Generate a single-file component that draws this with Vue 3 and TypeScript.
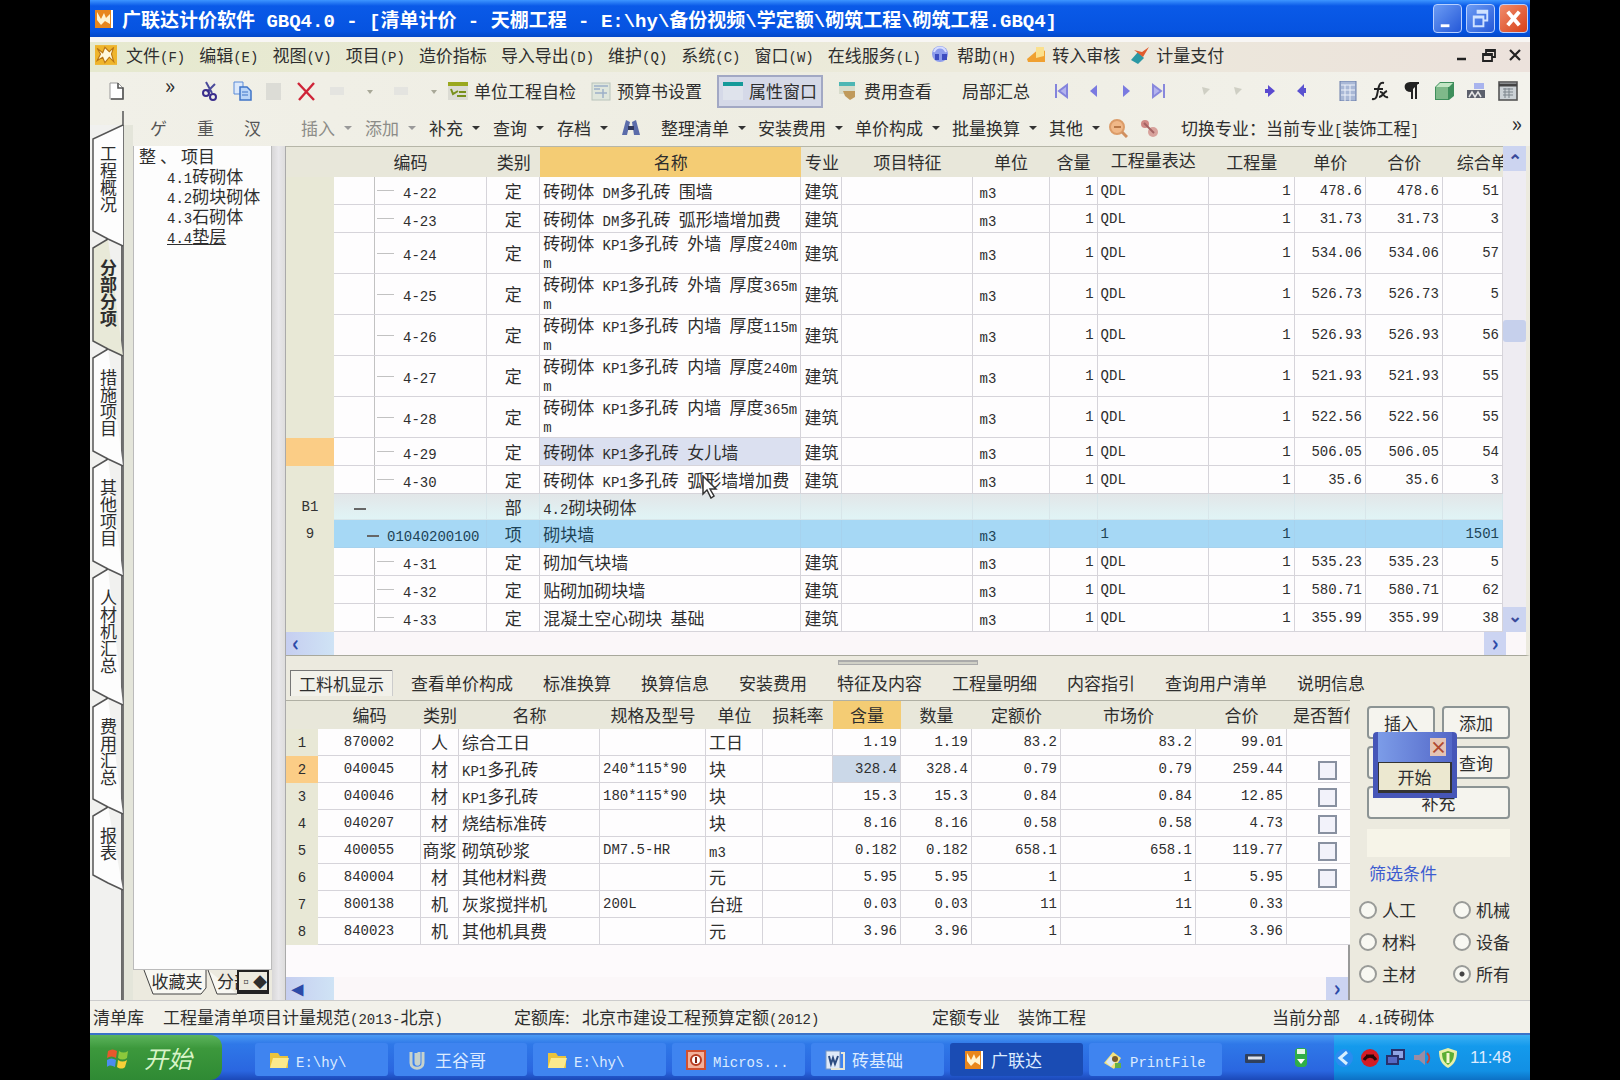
<script setup lang="ts">
import { h, ref } from 'vue'

// Splits a label into CJK and half-width runs so each gets its own face.
const Mixed = (props: { t: string }) =>
  props.t
    .split(/([\x20-\x7e]+)/)
    .filter((s) => s.length)
    .map((s) => (/^[\x20-\x7e]/.test(s) ? h('span', { class: 'en' }, s) : s))
Mixed.props = ['t']

const icons: Record<string, string> = {
  app: '<rect x="1" y="1" width="17" height="18" fill="#e8861c"/><path d="M3 3l4 7 3-6 2 5 4-4v10l-5-3-4 4-4-5z" fill="#fff3d0"/><rect x="17" y="1" width="2" height="18" fill="#fff"/>',
  app2: '<rect x="0" y="1" width="20" height="18" fill="#efb52c"/><path d="M2 4l5 4 2-5 4 4 4-4-2 6 2 7-4-4-4 5-2-5-5 3 3-6z" fill="#fff8dc" stroke="#b87412" stroke-width="1"/>',
  doc: '<path d="M4 2h8l5 5v11H4z" fill="#fff" stroke="#999"/><path d="M12 2v5h5v11H5" fill="none" stroke="#555" stroke-width="1.6"/>',
  cut: '<path d="M6 1l6 11M15 3L7 11" stroke="#4a4a9a" stroke-width="2" fill="none"/><circle cx="6" cy="12" r="3" fill="none" stroke="#3a2d8c" stroke-width="2"/><circle cx="13" cy="16" r="3" fill="none" stroke="#3a2d8c" stroke-width="2"/>',
  copy: '<path d="M2 1h9v12H2z" fill="#dce9fb" stroke="#5b8bd8"/><path d="M8 6h7l4 4v9H8z" fill="#b9d4f7" stroke="#3f74c8" stroke-width="1.5"/><path d="M10 11h6M10 14h6" stroke="#3f74c8"/>',
  paste: '<rect x="2" y="2" width="15" height="17" fill="#dcdcd6"/>',
  del: '<path d="M2 2l16 17M18 2L3 19" stroke="#cf2438" stroke-width="2.4"/>',
  faint: '<path d="M2 6h14v8H2z" fill="#e4e4e0"/>',
  dot: '<path d="M7 9h6l-3 4z" fill="#a8a898"/>',
  check: '<rect x="0" y="1" width="20" height="18" fill="#dcdcd4"/><rect x="0" y="1" width="20" height="4" fill="#9aa81e"/><path d="M3 8l2 5 5-3M9 15h9M11 11h7" stroke="#78901c" stroke-width="2" fill="none"/>',
  budget: '<rect x="1" y="2" width="18" height="17" fill="#dfe6dc" stroke="#b9c4bc"/><path d="M3 5h14M3 8h6M12 8v9M4 12h12" stroke="#9db0c8" stroke-width="1.5"/>',
  win: '<rect x="0" y="1" width="20" height="18" fill="#dfe3ec"/><rect x="0" y="1" width="20" height="4" fill="#159a9a"/>',
  fee: '<rect x="1" y="1" width="16" height="12" fill="#d8dccc"/><rect x="1" y="1" width="16" height="4" fill="#4db6b4"/><path d="M5 10h12v6l-5 3-5-4z" fill="#c09a5c"/>',
  first: '<path d="M4 3v14M15 4v12l-8-6z" stroke="#8484dc" stroke-width="2" fill="#b4b4ee"/>',
  prev: '<path d="M13 4v12l-7-6z" fill="#7a7ae0"/>',
  next: '<path d="M7 4v12l7-6z" fill="#7a7ae0"/>',
  last: '<path d="M16 3v14M5 4v12l8-6z" stroke="#8888dc" stroke-width="2" fill="#b4b4ee"/>',
  faintTri: '<path d="M6 6l8 2-6 6z" fill="#cfcfc4"/>',
  right: '<path d="M8 4l7 6-7 6v-4H5V8h3z" fill="#5a4ad0"/>',
  left: '<path d="M12 3l-7 7 7 6v-4h2V7h-2z" fill="#5a52d0"/>',
  sheet: '<rect x="2" y="0" width="16" height="20" fill="#a9b8d6" stroke="#6b7eaa"/><path d="M3 4h14M7 4v16M12 4v16M3 9h14M3 14h14" stroke="#eef2fa"/>',
  fx: '<path d="M2 18c5 1 5-4 6-9s2-8 6-7M4 8h9M10 11c4-1 3 7 8 5M17 10c-3 1-5 6-8 6" fill="none" stroke="#222" stroke-width="2"/>',
  para: '<path d="M10 2v16M14 2v16M17 2H8c-6 0-6 8 1 8" stroke="#222" stroke-width="2" fill="#222"/>',
  book: '<path d="M1 6l5-5h14v14l-5 4H1z" fill="#3f8f5c"/><path d="M2 6h12v12H2z" fill="#7fb98a"/><path d="M2 6l4-4h13l-4 4z" fill="#c2e6c4"/>',
  print: '<path d="M8 2h10v6H8z" fill="#a9b4ee"/><rect x="1" y="9" width="18" height="8" fill="#5c606c"/><path d="M3 16l3-5 3 5 3-5 3 5" stroke="#e6e6e6" stroke-width="1.5" fill="none"/>',
  calc: '<rect x="1" y="1" width="18" height="18" fill="#ccd2d6" stroke="#555" stroke-width="1.6"/><path d="M1 4h18" stroke="#444" stroke-width="3"/><path d="M5 8h10M5 11h10M5 14h10M7 7v10M11 7v10" stroke="#7d858c"/>',
  find: '<path d="M5 2l4 2-3 13H1zM11 4l4-2 4 15h-6z" fill="#5b6caa"/><path d="M7 8h6v4H7z" fill="#30385c"/>',
  lens: '<circle cx="9" cy="9" r="7" fill="#f0b888" stroke="#dc9c68" stroke-width="2"/><path d="M14 14l5 5" stroke="#d09060" stroke-width="3"/><path d="M6 9h7" stroke="#b87848" stroke-width="2"/>',
  link: '<circle cx="6" cy="6" r="4" fill="#d08a86"/><circle cx="14" cy="14" r="5" fill="#d8a29c"/><path d="M5 5l10 10" stroke="#a46464" stroke-width="2"/>',
  help: '<circle cx="9" cy="9" r="8" fill="#8c9cec"/><path d="M4 9h4v6H4zM11 9h5v6h-5z" fill="#3c4cc0"/><path d="M3 7c2-6 10-6 12 0" stroke="#d7ddff" stroke-width="2" fill="none"/>',
  audit: '<path d="M1 14L14 3l5 3v11H2z" fill="#f0a030"/><path d="M10 2h8v9l-8 2z" fill="#fbe08c"/>',
  pay: '<path d="M1 15l7-8 6 6-6 6z" fill="#2b98a4"/><path d="M4 5l8 2 7-5-6 10z" fill="#e05c30"/>',
  folder: '<path d="M1 3h8l2 3h8v12H1z" fill="#e9c33c"/><path d="M4 8h16l-3 10H1z" fill="#fbe98c"/>',
  clip: '<path d="M3 2v11c0 7 12 7 12 0V2M8 3v9c0 3 3 3 3 0V2" fill="none" stroke="#c6d2cc" stroke-width="3"/>',
  ppt: '<rect x="1" y="1" width="18" height="18" fill="#f2b09a" stroke="#d05030" stroke-width="2"/><circle cx="10" cy="10" r="5" fill="#fff" stroke="#b83c20" stroke-width="2"/><path d="M10 7v6" stroke="#802010" stroke-width="2"/>',
  word: '<rect x="1" y="1" width="14" height="18" fill="#dfeaf8" stroke="#7898c4"/><path d="M4 6l2 8 2-6 2 6 3-8" fill="none" stroke="#2c4c80" stroke-width="2"/><path d="M16 3h3v16H6" fill="none" stroke="#e8e8d8" stroke-width="2"/>',
  printer: '<path d="M1 13l9-11 8 6-7 11z" fill="#f4e27c"/><path d="M3 12l5-6 5 5-5 6z" fill="#d8e8f8"/><circle cx="12" cy="9" r="3" fill="#7a5c28"/><path d="M12 13h6v5h-6z" fill="#62b048"/>',
  kbd: '<rect x="0" y="6" width="20" height="9" rx="1" fill="#30405c"/><path d="M3 10h14" stroke="#dfe4ec" stroke-width="3"/>',
  usb: '<rect x="4" y="0" width="12" height="19" rx="4" fill="#2fae48"/><rect x="6" y="1" width="8" height="5" fill="#e4f8e4"/><path d="M6 11h8l-4 5z" fill="#fff"/>',
  chev: '<circle cx="10" cy="10" r="9" fill="#2a8cf0"/><path d="M13 4l-7 6 7 6" stroke="#d8efff" stroke-width="3" fill="none"/>',
  red: '<circle cx="10" cy="10" r="9" fill="#d41c24"/><path d="M4 12c3-5 9-5 12 0M6 8h8" stroke="#2c0808" stroke-width="3" fill="none"/>',
  net: '<rect x="6" y="2" width="12" height="9" fill="#8fa4e4" stroke="#28306c" stroke-width="2"/><rect x="1" y="8" width="11" height="8" fill="#5668c4" stroke="#28306c" stroke-width="2"/>',
  vol: '<path d="M2 7h5l6-5v15l-6-5H2z" fill="#9a8ca4"/><path d="M15 5c3 3 3 7 0 10" stroke="#c84038" stroke-width="2" fill="none"/>',
  shield: '<path d="M10 0l9 3c0 8-2 13-9 17C3 16 1 11 1 3z" fill="#e8f0a8"/><path d="M10 3l6 2c0 6-2 9-6 12-4-3-6-6-6-12z" fill="#5cae34"/><path d="M10 5v10" stroke="#f6f8d0" stroke-width="3"/>',
}

const menus = ['文件(F)', '编辑(E)', '视图(V)', '项目(P)', '造价指标', '导入导出(D)', '维护(Q)', '系统(C)', '窗口(W)', '在线服务(L)']
const iconMenus = [
  { icon: 'help', label: '帮助(H)' },
  { icon: 'audit', label: '转入审核' },
  { icon: 'pay', label: '计量支付' },
]
const editIcons = ['cut', 'copy', 'paste', 'del', 'faint', 'dot', 'faint', 'dot']
const toolButtons = [
  { icon: 'check', label: '单位工程自检', on: false },
  { icon: 'budget', label: '预算书设置', on: false },
  { icon: 'win', label: '属性窗口', on: true },
  { icon: 'fee', label: '费用查看', on: false },
]
const navIcons = ['first', 'prev', 'next', 'last']
const moveIcons = ['faintTri', 'faintTri', 'right', 'left']
const rightIcons = ['sheet', 'fx', 'para', 'book', 'print', 'calc']
const editMenus = [
  { label: '插入', dim: true },
  { label: '添加', dim: true },
  { label: '补充', dim: false },
  { label: '查询', dim: false },
  { label: '存档', dim: false },
]
const gridMenus = ['整理清单', '安装费用', '单价构成', '批量换算', '其他']

const sideTabs = [
  { label: '工程概况', h: 114 },
  { label: '分部分项', h: 110 },
  { label: '措施项目', h: 110 },
  { label: '其他项目', h: 110 },
  { label: '人材机汇总', h: 129 },
  { label: '费用汇总', h: 109 },
  { label: '报表', h: 76 },
]
const activeSide = ref(1)
const tabPath = (i: number, height: number) =>
  (i === 0 ? 'M31 -14 V0 L1 14' : 'M16 0 L1 9') + ` V${height - 8} L16 ${height} L31 ${height + 7}`

const tree = ['4.1砖砌体', '4.2砌块砌体', '4.3石砌体', '4.4垫层']

const topCols = [
  { label: '', w: 48 },
  { label: '编码', w: 153 },
  { label: '类别', w: 53 },
  { label: '名称', w: 261 },
  { label: '专业', w: 41 },
  { label: '项目特征', w: 130 },
  { label: '单位', w: 77 },
  { label: '含量', w: 48 },
  { label: '工程量表达', w: 111 },
  { label: '工程量', w: 86 },
  { label: '单价', w: 71 },
  { label: '合价', w: 77 },
  { label: '综合单', w: 60 },
]
type Row = { no?: string; code: string; kind: string; name: string; price?: string; sum?: string; all: string; type?: string; tall?: boolean }
const rows: Row[] = [
  { code: '4-22', kind: '定', name: '砖砌体 DM多孔砖 围墙', price: '478.6', sum: '478.6', all: '51' },
  { code: '4-23', kind: '定', name: '砖砌体 DM多孔砖 弧形墙增加费', price: '31.73', sum: '31.73', all: '3' },
  { code: '4-24', kind: '定', name: '砖砌体 KP1多孔砖 外墙 厚度240m\nm', price: '534.06', sum: '534.06', all: '57', tall: true },
  { code: '4-25', kind: '定', name: '砖砌体 KP1多孔砖 外墙 厚度365m\nm', price: '526.73', sum: '526.73', all: '5', tall: true },
  { code: '4-26', kind: '定', name: '砖砌体 KP1多孔砖 内墙 厚度115m\nm', price: '526.93', sum: '526.93', all: '56', tall: true },
  { code: '4-27', kind: '定', name: '砖砌体 KP1多孔砖 内墙 厚度240m\nm', price: '521.93', sum: '521.93', all: '55', tall: true },
  { code: '4-28', kind: '定', name: '砖砌体 KP1多孔砖 内墙 厚度365m\nm', price: '522.56', sum: '522.56', all: '55', tall: true },
  { code: '4-29', kind: '定', name: '砖砌体 KP1多孔砖 女儿墙', price: '506.05', sum: '506.05', all: '54', type: 'cur' },
  { code: '4-30', kind: '定', name: '砖砌体 KP1多孔砖 弧形墙增加费', price: '35.6', sum: '35.6', all: '3' },
  { no: 'B1', code: '', kind: '部', name: '4.2砌块砌体', all: '', type: 'part' },
  { no: '9', code: '01040200100', kind: '项', name: '砌块墙', all: '1501', type: 'item' },
  { code: '4-31', kind: '定', name: '砌加气块墙', price: '535.23', sum: '535.23', all: '5' },
  { code: '4-32', kind: '定', name: '贴砌加砌块墙', price: '580.71', sum: '580.71', all: '62' },
  { code: '4-33', kind: '定', name: '混凝土空心砌块 基础', price: '355.99', sum: '355.99', all: '38' },
]

const detailTabs = ['工料机显示', '查看单价构成', '标准换算', '换算信息', '安装费用', '特征及内容', '工程量明细', '内容指引', '查询用户清单', '说明信息']
const activeDetail = ref(0)
const lowCols = [
  { label: '', w: 32 },
  { label: '编码', w: 103 },
  { label: '类别', w: 38 },
  { label: '名称', w: 141 },
  { label: '规格及型号', w: 106 },
  { label: '单位', w: 57 },
  { label: '损耗率', w: 70 },
  { label: '含量', w: 68 },
  { label: '数量', w: 71 },
  { label: '定额价', w: 89 },
  { label: '市场价', w: 135 },
  { label: '合价', w: 91 },
  { label: '是否暂估', w: 63 },
]
const lowRows = [
  ['870002', '人', '综合工日', '', '工日', '1.19', '83.2', '99.01', ''],
  ['040045', '材', 'KP1多孔砖', '240*115*90', '块', '328.4', '0.79', '259.44', 'y'],
  ['040046', '材', 'KP1多孔砖', '180*115*90', '块', '15.3', '0.84', '12.85', 'y'],
  ['040207', '材', '烧结标准砖', '', '块', '8.16', '0.58', '4.73', 'y'],
  ['400055', '商浆', '砌筑砂浆', 'DM7.5-HR', 'm3', '0.182', '658.1', '119.77', 'y'],
  ['840004', '材', '其他材料费', '', '元', '5.95', '1', '5.95', 'y'],
  ['800138', '机', '灰浆搅拌机', '200L', '台班', '0.03', '11', '0.33', ''],
  ['840023', '机', '其他机具费', '', '元', '3.96', '1', '3.96', ''],
]
const filters = ['人工', '机械', '材料', '设备', '主材', '所有']
const filter = ref('所有')

const tasks = [
  { icon: 'folder', label: 'E:\\hy\\' },
  { icon: 'clip', label: '王谷哥' },
  { icon: 'folder', label: 'E:\\hy\\' },
  { icon: 'ppt', label: 'Micros...' },
  { icon: 'word', label: '砖基础' },
  { icon: 'app', label: '广联达', on: true },
  { icon: 'printer', label: 'PrintFile' },
]
const tray = ['red', 'net', 'vol', 'shield']
</script>

<template>
  <div class="screen">
    <div class="window">
      <header class="title">
        <svg class="ic" viewBox="0 0 20 20" v-html="icons.app"></svg>
        <h1><Mixed t="广联达计价软件 GBQ4.0 - [清单计价 - 天棚工程 - E:\hy\备份视频\学定额\砌筑工程\砌筑工程.GBQ4]" /></h1>
        <div class="winbtns">
          <button aria-label="最小化"><svg viewBox="0 0 28 28"><path d="M7 20h9v3H7z" fill="#fff" /></svg></button>
          <button aria-label="还原"><svg viewBox="0 0 28 28"><path d="M10 6h11v10h-4M7 12h10v10H7zM7 13h10M10 8h11" fill="none" stroke="#cfe2ff" stroke-width="2" /></svg></button>
          <button class="close" aria-label="关闭"><svg viewBox="0 0 28 28"><path d="M8 7l12 14M20 7L8 21" stroke="#fff" stroke-width="4" /></svg></button>
        </div>
      </header>

      <nav class="menu">
        <svg class="ic big" viewBox="0 0 20 20" v-html="icons.app2"></svg>
        <button v-for="m in menus" :key="m"><Mixed :t="m" /></button>
        <button v-for="m in iconMenus" :key="m.label" class="withicon">
          <svg class="ic" viewBox="0 0 20 20" v-html="icons[m.icon]"></svg><span><Mixed :t="m.label" /></span>
        </button>
        <div class="mdi">
          <button aria-label="最小化文档"><svg viewBox="0 0 14 14"><path d="M1 11h9" stroke="#222" stroke-width="2.5" /></svg></button>
          <button aria-label="还原文档"><svg viewBox="0 0 14 14"><path d="M4 5V2h9v7h-3M1 6h9v7H1zM4 3h9M1 7h9" fill="none" stroke="#222" stroke-width="1.8" /></svg></button>
          <button aria-label="关闭文档"><svg viewBox="0 0 14 14"><path d="M2 2l10 10M12 2L2 12" stroke="#222" stroke-width="2.2" /></svg></button>
        </div>
      </nav>

      <div class="toolbar first">
        <span class="cell new"><svg class="ic" viewBox="0 0 20 20" v-html="icons.doc"></svg></span>
        <span class="more">»</span>
        <div class="icons edit"><span v-for="(i, n) in editIcons" :key="n" class="cell"><svg class="ic" viewBox="0 0 20 20" v-html="icons[i]"></svg></span></div>
        <div class="tools">
          <button v-for="b in toolButtons" :key="b.label" :class="{ on: b.on }">
            <svg class="ic" viewBox="0 0 20 20" v-html="icons[b.icon]"></svg>{{ b.label }}
          </button>
        </div>
        <button class="partial">局部汇总</button>
        <div class="icons"><span v-for="i in navIcons" :key="i" class="cell"><svg class="ic" viewBox="0 0 20 20" v-html="icons[i]"></svg></span></div>
        <div class="icons"><span v-for="(i, n) in moveIcons" :key="n" class="cell"><svg class="ic" viewBox="0 0 20 20" v-html="icons[i]"></svg></span></div>
        <div class="icons end"><span v-for="i in rightIcons" :key="i" class="cell"><svg class="ic" viewBox="0 0 20 20" v-html="icons[i]"></svg></span></div>
      </div>

      <div class="toolbar second">
        <div class="stubs"><span>ゲ</span><span>重</span><span>汊</span></div>
        <div class="drops">
          <button v-for="m in editMenus" :key="m.label" :class="{ dim: m.dim }">{{ m.label }}<i class="arr"></i></button>
          <svg class="ic" viewBox="0 0 20 20" v-html="icons.find"></svg>
        </div>
        <div class="drops wide">
          <button v-for="m in gridMenus" :key="m">{{ m }}<i class="arr"></i></button>
        </div>
        <div class="pair">
          <svg class="ic" viewBox="0 0 20 20" v-html="icons.lens"></svg>
          <svg class="ic" viewBox="0 0 20 20" v-html="icons.link"></svg>
        </div>
        <button><Mixed t="切换专业：当前专业[装饰工程]" /></button>
        <span class="more end">»</span>
      </div>

      <main class="body">
        <nav class="side">
          <button v-for="(t, i) in sideTabs" :key="t.label" :class="{ on: i === activeSide }" @click="activeSide = i">
            <svg :height="t.h" width="34"><path :d="tabPath(i, t.h)" :fill="i === activeSide ? '#e8e9d8' : '#fdfdfd'" stroke="#555" stroke-width="1.5" /></svg>
            <span>{{ t.label }}</span>
          </button>
        </nav>

        <section class="treepane">
          <div class="tree">
            <p><span>整</span><span>、</span><span>项目</span></p>
            <ul>
              <li v-for="t in tree" :key="t"><Mixed :t="t" /></li>
            </ul>
          </div>
          <div class="foot">
            <button><svg width="64" height="26"><path d="M1 0l9 24h48l5-6V0" fill="#f8f8f2" stroke="#444" /></svg><span>收藏夹</span></button>
            <button class="cutoff"><svg width="30" height="26"><path d="M1 0l9 24h20" fill="#f8f8f2" stroke="#444" /></svg><span>分部</span></button>
            <div class="spin"><button aria-label="左移">▫</button><button aria-label="右移">◆</button></div>
          </div>
        </section>
        <div class="splitter"></div>

        <section class="work">
          <div class="upper">
            <div class="scroller">
              <table>
                <colgroup><col v-for="c in topCols" :key="c.label" :style="{ width: c.w + 'px' }" /></colgroup>
                <thead>
                  <tr><th v-for="(c, i) in topCols" :key="i" :class="{ hot: i === 3, clip: i === 12 }">{{ c.label }}</th></tr>
                </thead>
                <tbody>
                  <tr v-for="r in rows" :key="r.code + r.name" :class="[r.type, { tall: r.tall, leaf: !r.no }]">
                    <td class="rh">{{ r.no }}</td>
                    <td class="code"><span v-if="r.no" class="minus"></span><span class="en">{{ r.code }}</span></td>
                    <td class="c">{{ r.kind }}</td>
                    <td class="name"><Mixed :t="r.name" /></td>
                    <td class="c">{{ r.no ? '' : '建筑' }}</td>
                    <td></td>
                    <td class="unit"><span class="en">{{ r.type === 'part' ? '' : 'm3' }}</span></td>
                    <td class="r en">{{ r.no ? '' : '1' }}</td>
                    <td class="en">{{ r.no ? (r.no === '9' ? '1' : '') : 'QDL' }}</td>
                    <td class="r en">{{ r.type === 'part' ? '' : '1' }}</td>
                    <td class="r en">{{ r.price }}</td>
                    <td class="r en">{{ r.sum }}</td>
                    <td class="r en">{{ r.all }}</td>
                  </tr>
                </tbody>
              </table>
              <div class="vbar"><span class="sb">⌃</span><span class="thumb"></span><span class="sb low">⌄</span></div>
            </div>
            <div class="hbar"><span class="hl">‹</span><span class="hr">›</span></div>
            <svg class="cursor" viewBox="0 0 16 24"><path d="M1 1v18l4-4 4 8 3-2-4-7h6z" fill="#fff" stroke="#333" stroke-width="1.5" /></svg>
          </div>

          <div class="grip"><span></span></div>
          <div class="tabs">
            <button v-for="(t, i) in detailTabs" :key="t" :class="{ on: i === activeDetail }" @click="activeDetail = i">{{ t }}</button>
          </div>

          <div class="lower">
            <div class="lowgrid">
              <table>
                <colgroup><col v-for="c in lowCols" :key="c.label" :style="{ width: c.w + 'px' }" /></colgroup>
                <thead>
                  <tr><th v-for="(c, i) in lowCols" :key="i" :class="{ hot: i === 7, clip: i === 12 }">{{ c.label }}</th></tr>
                </thead>
                <tbody>
                  <tr v-for="(r, i) in lowRows" :key="r[0]" :class="{ sel: i === 1 }">
                    <td class="rh">{{ i + 1 }}</td>
                    <td class="c en">{{ r[0] }}</td>
                    <td class="c">{{ r[1] }}</td>
                    <td><Mixed :t="r[2]" /></td>
                    <td class="en">{{ r[3] }}</td>
                    <td><Mixed :t="r[4]" /></td>
                    <td></td>
                    <td class="r en amt">{{ r[5] }}</td>
                    <td class="r en">{{ r[5] }}</td>
                    <td class="r en">{{ r[6] }}</td>
                    <td class="r en">{{ r[6] }}</td>
                    <td class="r en">{{ r[7] }}</td>
                    <td class="chk"><input v-if="r[8]" type="checkbox" :aria-label="'是否暂估 ' + r[2]" /></td>
                  </tr>
                </tbody>
              </table>
              <div class="hbar"><span class="hl">◂</span><span class="hr">›</span></div>
            </div>

            <aside class="panel">
              <div class="btns">
                <button>插入</button><button>添加</button>
                <button aria-label="删除"></button><button>查询</button>
                <button class="full">补充</button>
              </div>
              <input class="search" type="text" aria-label="查找" />
              <fieldset>
                <legend>筛选条件</legend>
                <label v-for="f in filters" :key="f"><input v-model="filter" type="radio" name="filter" :value="f" />{{ f }}</label>
              </fieldset>
              <div class="popup">
                <div class="ptitle"><button aria-label="关闭">×</button></div>
                <button class="start">开始</button>
              </div>
            </aside>
          </div>
        </section>
      </main>

      <footer class="status">
        <span>清单库</span><span><Mixed t="工程量清单项目计量规范(2013-北京)" /></span>
        <span>定额库:</span><span><Mixed t="北京市建设工程预算定额(2012)" /></span>
        <span>定额专业</span><span>装饰工程</span>
        <span>当前分部</span><span><Mixed t="4.1砖砌体" /></span>
      </footer>

      <div class="taskbar">
        <button class="startbtn">
          <svg viewBox="0 0 24 24"><path d="M2 5c3-2 6-2 9 0l-1 7c-3-2-6-2-9 0z" fill="#e8582c" /><path d="M13 5c3 2 6 2 9 0l-1 7c-3 2-6 2-9 0z" fill="#8cc83c" /><path d="M1 14c3-2 6-2 9 0l-1 7c-3-2-6-2-8 0z" fill="#4c8cf0" /><path d="M12 14c3 2 6 2 9 0l-2 7c-2 2-5 2-8 0z" fill="#f8d038" /></svg>
          开始
        </button>
        <div class="tasks">
          <button v-for="(t, i) in tasks" :key="i" :class="{ on: t.on }">
            <svg class="ic" viewBox="0 0 20 20" v-html="icons[t.icon]"></svg><span><Mixed :t="t.label" /></span>
          </button>
        </div>
        <div class="lang">
          <svg class="ic" viewBox="0 0 20 20" v-html="icons.kbd"></svg>
          <svg class="ic" viewBox="0 0 20 20" v-html="icons.usb"></svg>
        </div>
        <div class="tray">
          <svg class="ic" viewBox="0 0 20 20" v-html="icons.chev"></svg>
          <svg v-for="i in tray" :key="i" class="ic" viewBox="0 0 20 20" v-html="icons[i]"></svg>
          <time>11:48</time>
        </div>
      </div>
    </div>
  </div>
</template>

<style>
body { background: #000; }
.en { font-family: "Liberation Mono", monospace; font-size: 14px; }
span.en { line-height: 0; }
</style>

<style scoped>
* { box-sizing: border-box; }
.screen { min-height: 100vh; padding: 0 90px; background: #000; display: flex; color: #2e2e2e; font: 17px/20px "Noto Sans CJK SC", sans-serif; }
.window { flex: 1; min-width: 0; display: flex; flex-direction: column; background: #eceadf; }
button { font: inherit; color: inherit; background: none; border: 0; padding: 0; margin: 0; white-space: nowrap; }
.ic { width: 20px; height: 20px; flex: none; display: block; }
h1 { margin: 0; font-size: 19px; font-weight: 700; line-height: 36px; white-space: pre; }

.title { height: 37px; display: flex; align-items: center; gap: 8px; padding: 0 2px 0 4px; color: #fff; background: linear-gradient(#3d95ff, #0a5ae8 16%, #0653e0 85%, #0448c8); }
.title h1 { flex: 1; }
.title h1 :deep(.en) { font-size: 19px; }
.winbtns { display: flex; gap: 4px; }
.winbtns button { width: 29px; height: 29px; border: 1px solid #b8d0ff; border-radius: 4px; background: linear-gradient(135deg, #6c9cf4, #2458d8); display: block; }
.winbtns .close { background: linear-gradient(135deg, #f08c6c, #d84018); }
.winbtns svg { display: block; width: 27px; height: 27px; }

.menu { height: 35px; border-top: 5px solid #f8f6f4; background: linear-gradient(90deg, #e6e9cf, #eceadb 60%, #ece2dc); display: flex; align-items: center; gap: 14px; padding: 0 8px 4px 4px; }
.menu .big { width: 24px; height: 22px; margin-right: -6px; }
.withicon { display: flex; align-items: center; gap: 6px; }
.menu .withicon { margin-left: -4px; }
.mdi { margin-left: auto; display: flex; gap: 12px; }
.mdi svg { width: 14px; height: 14px; display: block; }

.toolbar { height: 38px; display: flex; align-items: center; background: linear-gradient(90deg, #f1f0e8, #eeede2 50%, #f3f2ec); }
.cell { width: 32px; display: flex; justify-content: center; flex: none; }
.icons { display: flex; }
.first .new { margin-left: 10px; }
.first .more { width: 62px; padding-left: 14px; text-align: center; }
.edit { width: 254px; flex: none; }
.tools { display: flex; gap: 15px; }
.tools button { display: flex; align-items: center; gap: 6px; height: 33px; }
.tools .on { padding: 0 4px; border: 2px solid #a2a8c4; background: #d5d9e8; }
.partial { margin: 0 16px 0 30px; }
.icons + .icons { margin-left: 16px; }
.icons.end, .more.end { margin-left: auto; }
.icons.end { padding-right: 6px; }
.more { font-size: 22px; line-height: 24px; align-self: flex-start; }
.more.end { padding-right: 8px; }

.second { height: 36px; }
.stubs { display: flex; gap: 30px; width: 211px; padding-left: 60px; color: #555; }
.drops { display: flex; align-items: center; gap: 13px; }
.drops button { display: flex; align-items: center; gap: 9px; }
.drops .dim { color: #8c8c88; }
.arr { border: 4px solid transparent; border-top: 4px solid #333; border-bottom: 0; }
.dim .arr { border-top-color: #999; }
.wide { margin-left: 20px; gap: 12px; }
.pair { display: flex; gap: 11px; margin: 0 22px 0 8px; }

.body { flex: 1; display: flex; min-height: 0; }
.side { width: 43px; flex: none; padding-left: 2px; background: linear-gradient(90deg, #f1f1ef 31px, #666 31px, #777 34px, #e4e5da 34px); display: flex; flex-direction: column; margin-top: -21px; }
.side button { display: grid; justify-items: start; text-align: start; }
.side button > * { grid-area: 1 / 1; }
.side svg { overflow: visible; display: block; }
.side span { writing-mode: vertical-rl; text-orientation: upright; padding: 20px 0 0 6px; line-height: 20px; position: relative; }
.side .on { font-weight: 700; }

.treepane { width: 139px; flex: none; display: flex; flex-direction: column; }
.tree { flex: 1; background: #fdfdfd; border: 1px solid #bbb; border-top: 0; }
.tree p { margin: 0; display: flex; gap: 4px; padding-left: 5px; }
.tree ul { list-style: none; margin: 0; padding-left: 33px; white-space: nowrap; }
.tree li:last-child { text-decoration: underline; }
.foot { height: 30px; display: flex; padding-left: 10px; }
.foot button { display: grid; }
.foot button > * { grid-area: 1 / 1; }
.foot > button { width: 64px; }
.foot span { position: relative; padding-left: 4px; line-height: 22px; }
.foot .cutoff { width: 30px; overflow: hidden; }
.foot .cutoff span { padding-left: 10px; }
.spin { display: flex; height: 24px; border: 2px solid #222; border-bottom-width: 4px; align-items: center; font-size: 14px; line-height: 16px; }
.spin button { width: 14px; }
.splitter { width: 14px; flex: none; background: linear-gradient(90deg, #d8d7d8, #e8e7ea 50%, #dedddd); border-right: 1px solid #aaa; }

.work { flex: 1; min-width: 0; display: flex; flex-direction: column; }
table { width: 100%; table-layout: fixed; border-collapse: separate; border-spacing: 0; }
th { font-weight: 400; padding: 0; height: 31px; background: #e8e7da; border-top: 1px solid #b6b6a8; white-space: nowrap; overflow: hidden; }
th.hot { background: #f4cc74; }
td { padding: 0 3px; height: 28px; border: solid #d6d4da; border-width: 0 1px 1px 0; background: #fefdfe; white-space: nowrap; overflow: hidden; }
.c { text-align: center; padding: 0; }
.r { text-align: right; }
td.rh { background: #e8e8d6; border: 0; text-align: center; font-family: "Liberation Mono", monospace; font-size: 14px; padding: 0; }
.clip { text-align: left; padding-left: 14px; text-overflow: clip; }

.upper { position: relative; background: #fdfafb; border-right: 4px solid #eceadf; border-bottom: 1px solid #a8a89c; }
.upper th:nth-child(9) { line-height: 18px; padding-bottom: 4px; }
.scroller { display: flex; }
.scroller table { flex: 1; width: 0; }
.vbar { width: 23px; flex: none; background: #eeecf2; display: flex; flex-direction: column; color: #3a4a9a; }
.sb { height: 25px; background: #ccd4f0; text-align: center; line-height: 28px; font-weight: 700; }
.sb.low { margin-top: auto; line-height: 16px; }
.thumb { height: 22px; margin-top: 149px; background: #c6d0ec; border-radius: 3px; }
.hbar { height: 23px; display: flex; justify-content: space-between; color: #2c4aa8; font-size: 22px; font-weight: 700; background: #fbf7f9; }
.hl { width: 48px; padding-left: 6px; background: linear-gradient(90deg, #c6cef0, #cfe3f5); line-height: 18px; }
.hr { width: 22px; background: #ccd4f2; text-align: center; line-height: 18px; }
.upper .hr { margin-right: 20px; }
.tall td { height: 41px; }
.tall .name { white-space: pre; line-height: 18px; padding-bottom: 3px; }
.name { white-space: pre; }
td.code { padding-left: 69px; }
.leaf td.code { background: linear-gradient(#c2c2c2, #c2c2c2) 40px 0 / 1px 100% no-repeat, linear-gradient(#c2c2c2, #c2c2c2) 43px 50% / 17px 1px no-repeat, #fefdfe; }
.unit { padding-left: 7px; }
.cur td.name { background: #dbe0f0; }
.cur td.rh { background: #fbcd86; }
.part td { background: linear-gradient(#e2e6e8, #e0f4f6); border-color: #d8e6ea; height: 26px; }
.part td.code { padding-left: 20px; }
.item td { background: #a6d8f5; border-color: #a6d2ee; color: #1d4356; }
.item td.code { padding-left: 33px; }
.part td.rh, .item td.rh { background: #e8e8d6; color: #333; }
.minus { display: inline-block; width: 12px; height: 2px; background: #666; vertical-align: middle; margin-right: 8px; }
.cursor { position: absolute; left: 416px; top: 329px; width: 16px; height: 24px; }

.grip { height: 10px; padding-top: 4px; }
.grip span { display: block; width: 140px; height: 5px; margin: 0 auto; border: solid #aaa; border-width: 2px 1px 1px; background: #d0d0c6; }
.tabs { height: 35px; display: flex; align-items: center; padding-left: 4px; border-bottom: 1px solid #b0b0a4; margin-right: 180px; }
.tabs button { padding: 0 15px; height: 26px; }
.tabs button.on { background: #f2f1ea; border: solid #777; border-width: 1px 0 0 1px; padding: 0 8px; margin-right: 4px; box-shadow: 1px 0 #ccc; }

.lower { flex: 1; display: flex; }
.lowgrid { flex: 1; min-width: 0; display: flex; flex-direction: column; background: #fdfafc; border-right: 2px solid #999; }
.lowgrid th { height: 28px; border: 0; }
.lowgrid td { height: 27px; }
.lowgrid .c { padding: 0; }
.lowgrid .hbar { margin-top: auto; }
.sel td.rh { background: #fbcd86; }
.sel .amt { background: #cbd8e8; }
.lowgrid td.chk { padding: 0; text-align: center; border-right: 0; }
.chk input { appearance: none; width: 19px; height: 19px; margin: 0 0 0 18px; border: 2px solid #8890a0; background: #f2f2fa; vertical-align: middle; }
.lowgrid th.clip { padding-left: 6px; }

.panel { width: 180px; flex: none; position: relative; padding: 5px 20px 0 17px; }
.btns { display: grid; grid-template-columns: 1fr 1fr; gap: 7px; }
.btns button { height: 33px; border: 2px solid #8c9494; border-radius: 4px; background: #f5f4ee; }
.btns .full { grid-column: 1 / -1; }
.search { width: 100%; height: 28px; margin-top: 10px; border: 0; background: #f6f4e8; display: block; }
fieldset { border: 0; margin: 6px -8px 0 -8px; padding: 0; display: grid; grid-template-columns: 94px auto; row-gap: 12px; white-space: nowrap; }
legend { color: #3c5cd0; padding: 0 0 17px 10px; }
label { display: flex; align-items: center; gap: 5px; height: 20px; }
label input { appearance: none; width: 18px; height: 18px; margin: 0; border: 2px solid #999b98; border-radius: 50%; background: #f8f8f2; flex: none; }
label input:checked { background: radial-gradient(#444 2px, #f8f8f2 3px); }
.popup { position: absolute; left: 23px; top: 31px; width: 84px; padding: 0 5px 5px; background: #4656b8; border-radius: 4px 4px 0 0; }
.ptitle { height: 30px; display: flex; justify-content: flex-end; align-items: center; background: linear-gradient(90deg, #7c9ce8, #5468c8); }
.ptitle button { width: 16px; height: 18px; background: #e4c4b4; color: #b04830; line-height: 16px; font-weight: 700; margin-right: 6px; }
.start { width: 100%; height: 31px; background: #ece8d0; border: solid #333; border-width: 1px 2px 3px 1px; }

.status { height: 33px; display: grid; grid-template-columns: 70fr 351fr 68fr 350fr 86fr 254fr 86fr 172fr; align-items: center; padding: 0 0 0 3px; background: #f2f1ea; border-top: 1px solid #ccc; white-space: nowrap; }

.taskbar { height: 47px; display: flex; background: linear-gradient(#4a9af4, #2f78e8 20%, #2a66e0 80%, #1b48b8); color: #dcebff; border-top: 2px solid #3a72c8; }
.startbtn { width: 132px; flex: none; display: flex; align-items: center; gap: 14px; padding-left: 16px; border-radius: 0 12px 12px 0; background: linear-gradient(#5cb45c, #3c983c 30%, #2f8a34); font-size: 24px; font-style: italic; color: #d8f4c8; }
.startbtn svg { width: 24px; height: 24px; }
.tasks { flex: 1; display: grid; grid-template-columns: repeat(7, 1fr); gap: 6px; padding: 8px 0 4px 33px; min-width: 0; }
.tasks button { display: flex; align-items: center; gap: 7px; padding-left: 14px; border-radius: 3px; background: #3f84f0; overflow: hidden; }
.tasks .on { background: #1a4cb4; }
.lang { width: 112px; flex: none; display: flex; align-items: center; justify-content: center; gap: 26px; }
.tray { width: 196px; flex: none; display: flex; align-items: center; gap: 6px; background: linear-gradient(#3cb0f4, #149aec 25%, #1290e4 80%, #0c70c4); }
.tray time { margin-left: 6px; font: 17px/20px "Liberation Sans", sans-serif; }
</style>
